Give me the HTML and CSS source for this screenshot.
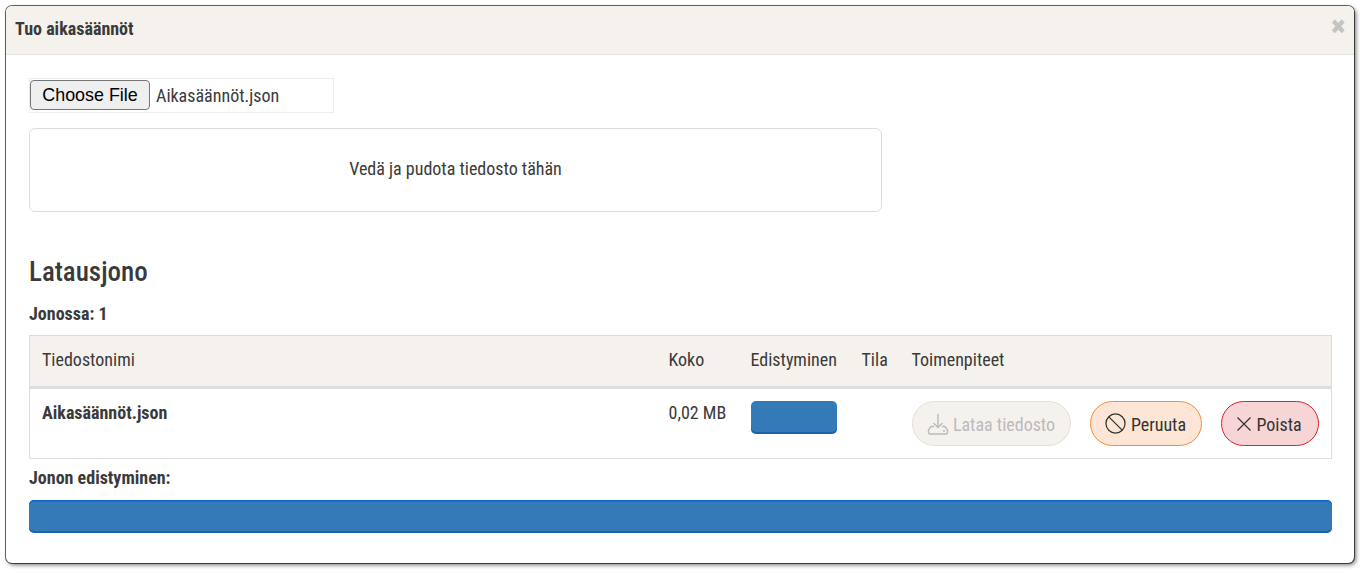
FILE: index.html
```html
<!DOCTYPE html>
<html lang="fi">
<head>
<meta charset="utf-8">
<title>Tuo aikasäännöt</title>
<link rel="stylesheet" href="styles.css">
</head>
<body>
<div class="modal">
  <header class="modal-head">
    <h1 class="modal-title">Tuo aikasäännöt</h1>
    <span class="close">&#10006;</span>
  </header>
  <div class="modal-body">
    <div class="file-input">
      <button class="file-btn" type="button">Choose File</button>
      <span class="file-name">Aikasäännöt.json</span>
    </div>
    <div class="drop">Vedä ja pudota tiedosto tähän</div>
    <h2 class="queue-title">Latausjono</h2>
    <p class="queue-count">Jonossa: 1</p>
    <table class="queue">
      <thead>
        <tr>
          <th class="c-name">Tiedostonimi</th>
          <th class="c-size">Koko</th>
          <th class="c-prog">Edistyminen</th>
          <th class="c-state">Tila</th>
          <th>Toimenpiteet</th>
        </tr>
      </thead>
      <tbody>
        <tr>
          <td class="cell-text file-title">Aikasäännöt.json</td>
          <td class="cell-text">0,02 MB</td>
          <td><div class="bar bar-small"></div></td>
          <td></td>
          <td>
            <div class="actions">
              <button class="pill pill-upload" type="button">
                <svg class="ico" viewBox="0 0 22 22" fill="none" stroke="currentColor" stroke-width="1.4"><path d="M11 1v13.500M6.500 10l4.500 4.500 4.500-4.500"/><path d="M7 13.500H4L1.500 17v2.500a1.500 1.500 0 0 0 1.500 1.500h16a1.500 1.500 0 0 0 1.500-1.500V17L18 13.500h-3M16 18h2"/></svg>
                Lataa tiedosto
              </button>
              <button class="pill pill-cancel" type="button">
                <svg class="ico ico-cancel" viewBox="0 0 22 22" fill="none" stroke="currentColor" stroke-width="1.3"><circle cx="11" cy="11" r="10"/><path d="M4 4l14 14"/></svg>
                Peruuta
              </button>
              <button class="pill pill-remove" type="button">
                <svg class="ico ico-x" viewBox="0 0 14 14" fill="none" stroke="currentColor" stroke-width="1.2"><path d="M.5.500l13 13M13.500.500l-13 13"/></svg>
                Poista
              </button>
            </div>
          </td>
        </tr>
      </tbody>
    </table>
    <p class="queue-progress">Jonon edistyminen:</p>
    <div class="bar bar-full"></div>
  </div>
</div>
</body>
</html>
```
FILE: styles.css
```css
* { box-sizing: border-box; }
html, body { height: 100%; }
body {
  margin: 0;
  padding: 6px;
  background: #fff;
  color: #3a3a3a;
  font-family: Roboto, "Liberation Sans", sans-serif;
  font-stretch: 75%;
  font-size: 18px;
  overflow: hidden;
}
.modal {
  width: 1348px;
  height: 557px;
  background: #fff;
  border-radius: 6px;
  box-shadow: 0 0 0 1px rgba(0,0,0,.6), 2px 2px 4px rgba(0,0,0,.55);
  overflow: hidden;
}
.modal-head {
  height: 49px;
  background: #f5f2ed;
  border-bottom: 1px solid #e5e5e5;
  display: flex;
  justify-content: space-between;
  align-items: center;
  padding: 0 9px;
}
.modal-title { margin: -3px 0 0; font-size: 18px; line-height: 22px; font-weight: 700; color: #3a3a3a; }
.close { color: #c4c4c4; font-size: 21px; font-weight: 700; font-family: "DejaVu Sans", sans-serif; margin-top: -6px; margin-right: -1px; }
.modal-body { padding: 23px 22px 0 23px; }
.file-input {
  width: 305px;
  height: 35px;
  border: 1px solid #eee;
  display: flex;
  align-items: center;
  gap: 6px;
}
.file-btn {
  width: 120px;
  height: 30px;
  margin: -1px 0 0;
  padding: 0;
  border: 1px solid #767676;
  border-radius: 4px;
  background: #efefef;
  color: #000;
  font-family: "Liberation Sans", sans-serif;
  font-stretch: normal;
  font-size: 17.9px;
}
.file-name { font-size: 18px; margin-top: -1px; }
.drop {
  width: 853px;
  height: 84px;
  margin-top: 15px;
  border: 1px solid #ddd;
  border-radius: 6px;
  padding-bottom: 4px;
  display: flex;
  align-items: center;
  justify-content: center;
}
.queue-title { margin: 44px 0 0; font-size: 27px; line-height: 32px; font-weight: 500; color: #3a3a3a; }
.queue-count { margin: 16px 0 0; font-weight: 700; line-height: 20px; }
.queue {
  width: 1303px;
  margin-top: 11px;
  border: 1px solid #ddd;
  border-collapse: collapse;
  table-layout: fixed;
}
.queue th {
  height: 52px;
  padding: 0 12px 4px;
  background: #f5f2ed;
  border-bottom: 3px solid #ddd;
  font-weight: 400;
  text-align: left;
}
.queue td { padding: 12px; height: 69px; vertical-align: top; line-height: 22px; }
.queue .cell-text { padding-top: 13px; }
.c-name { width: 627px; }
.c-size { width: 82px; }
.c-prog { width: 111px; }
.c-state { width: 50px; }
.queue .file-title { font-weight: 700; }
.bar {
  background: #337ab7;
  border-radius: 5px;
  height: 33px;
  box-shadow: inset 0 -2px 0 rgba(0,70,160,.45), inset 0 1.5px 0 #0a64c4;
}
.bar-small { width: 86px; box-shadow: inset 0 -2px 0 rgba(0,70,160,.45); }
.actions { display: flex; gap: 19px; }
.pill {
  height: 45px;
  padding: 1px 0 0;
  border-radius: 23px;
  border: 1px solid;
  display: flex;
  align-items: center;
  justify-content: center;
  gap: 5px;
  font-family: inherit;
  font-stretch: inherit;
  font-size: 18px;
  color: #333;
}
.ico { width: 22px; height: 22px; flex: none; margin-top: -1px; }
.ico-cancel { width: 21px; height: 21px; }
.ico-x { width: 14px; height: 14px; }
.pill-upload { width: 159px; gap: 4px; background: #f5f2ed; border-color: #e3e0db; color: #bbb; }
.pill-cancel { width: 112px; background: #fde6d5; border-color: #f58b3c; }
.pill-remove { width: 98px; background: #f7d4d6; border-color: #d9232e; }
.queue-progress { margin: 9px 0 0; font-weight: 700; line-height: 20px; }
.bar-full { width: 1303px; margin-top: 12px; }
```
